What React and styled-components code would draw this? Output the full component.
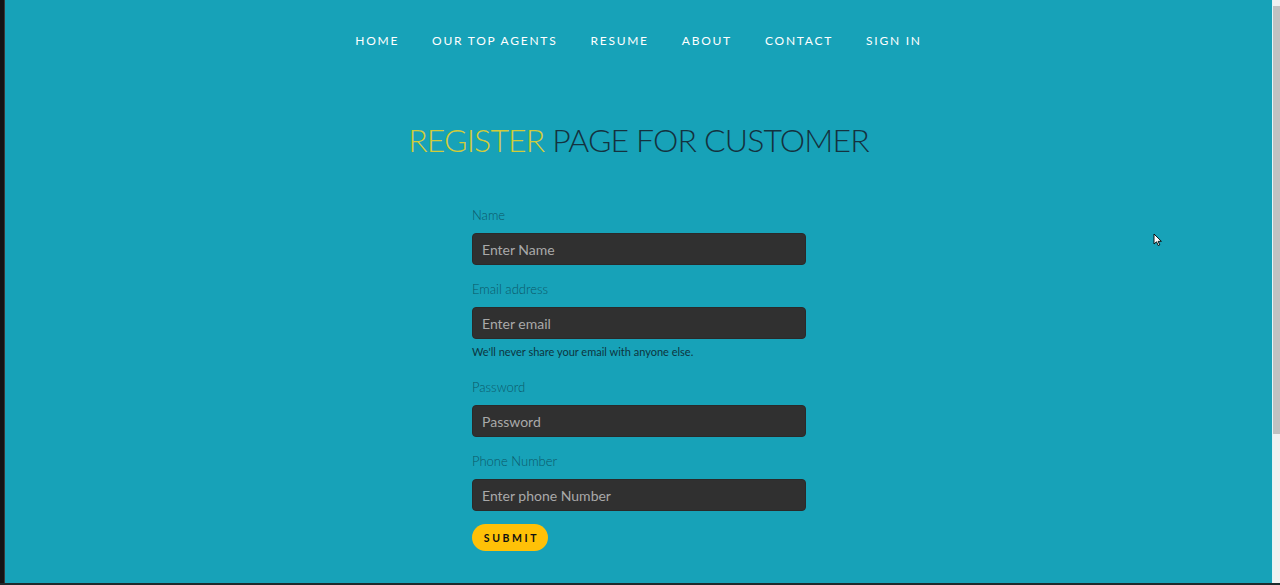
import React from "react";
import styled, { createGlobalStyle } from "styled-components";

const GlobalStyle = createGlobalStyle`
  html, body {
    margin: 0;
    padding: 0;
    height: 585px;
    overflow: hidden;
    background: #1b1b1b;
  }
  * {
    box-sizing: border-box;
  }
`;

const Frame = styled.div`
  display: flex;
  width: 1280px;
  height: 585px;
  border-bottom: 2px solid #1e2a2c;
`;

const EdgeStrip = styled.div`
  width: 5px;
  background: #141414;
  border-right: 1px solid #3a3a3a;
`;

const Page = styled.main`
  position: relative;
  flex: 1;
  background: #17a2b8;
  display: flex;
  flex-direction: column;
  align-items: center;
  font-family: "Lato", "Open Sans", sans-serif;
`;

const Scrollbar = styled.div`
  width: 8px;
  background: #f1f1f1;
  border-left: 1px solid #e6f4f6;
  display: flex;
  flex-direction: column;
  padding-top: 6px;
`;

const Thumb = styled.div`
  height: 428px;
  background: #c1c1c1;
`;

const Nav = styled.nav`
  display: flex;
  gap: 33px;
  padding-top: 33px;
`;

const NavLink = styled.a`
  color: #ffffff;
  font-size: 12px;
  letter-spacing: 1.75px;
  text-decoration: none;
  line-height: 16px;
`;

const Title = styled.h1`
  margin: 69px 0 0;
  font-size: 32px;
  font-weight: 300;
  line-height: 44px;
  color: #14323f;
  letter-spacing: -0.85px;
`;

const Accent = styled.span`
  color: #d2cc3a;
`;

const Form = styled.form`
  width: 334px;
  margin-top: 45px;
  margin-left: 1px;
  display: flex;
  flex-direction: column;
`;

const Group = styled.div`
  display: flex;
  flex-direction: column;
  margin-bottom: 16px;
`;

const Label = styled.label`
  font-size: 13px;
  font-weight: 300;
  color: #0c5868;
  line-height: 16px;
  margin-bottom: 10px;
`;

const Input = styled.input`
  height: 32px;
  border: 1px solid #2a2a2a;
  border-radius: 4px;
  background: #303030;
  padding: 0 9px;
  font-family: "Lato", sans-serif;
  font-size: 14px;
  color: #ddd;
  &::placeholder {
    color: #a9a9a9;
  }
`;

const Help = styled.small`
  font-size: 11px;
  line-height: 14px;
  color: #0d3540;
  margin-top: 6px;
  margin-bottom: 4px;
`;

const Submit = styled.button`
  align-self: flex-start;
  width: 76px;
  height: 27px;
  margin-top: -3px;
  border: none;
  border-radius: 14px;
  background: #ffc107;
  color: #111;
  font-family: "Lato", sans-serif;
  font-weight: 700;
  font-size: 10.5px;
  letter-spacing: 2.6px;
  padding: 0 0 0 3px;
`;

const Cursor = styled.svg`
  position: absolute;
  left: 1148px;
  top: 233px;
`;

const links = ["HOME", "OUR TOP AGENTS", "RESUME", "ABOUT", "CONTACT", "SIGN IN"];

const fields = [
  { label: "Name", placeholder: "Enter Name", type: "text" },
  {
    label: "Email address",
    placeholder: "Enter email",
    type: "email",
    help: "We'll never share your email with anyone else.",
  },
  { label: "Password", placeholder: "Password", type: "password" },
  { label: "Phone Number", placeholder: "Enter phone Number", type: "text" },
];

const App = () => {
  return (
    <>
      <GlobalStyle />
      <Frame>
        <EdgeStrip />
        <Page>
          <Nav>
            {links.map(l => (
              <NavLink href="#" key={l}>
                {l}
              </NavLink>
            ))}
          </Nav>
          <Title>
            <Accent>REGISTER</Accent> PAGE FOR CUSTOMER
          </Title>
          <Form onSubmit={e => e.preventDefault()}>
            {fields.map(f => (
              <Group key={f.label}>
                <Label>{f.label}</Label>
                <Input type={f.type} placeholder={f.placeholder} />
                {f.help && <Help>{f.help}</Help>}
              </Group>
            ))}
            <Submit type="submit">SUBMIT</Submit>
          </Form>
          <Cursor width="10" height="14" viewBox="0 0 10 14">
            <path d="M1 1 L1 11 L3.5 8.8 L5.3 12.6 L6.8 11.9 L5.1 8.3 L8.4 8.3 Z" fill="#fff" stroke="#000" strokeWidth="0.9" />
          </Cursor>
        </Page>
        <Scrollbar>
          <Thumb />
        </Scrollbar>
      </Frame>
    </>
  );
};

export default App;
